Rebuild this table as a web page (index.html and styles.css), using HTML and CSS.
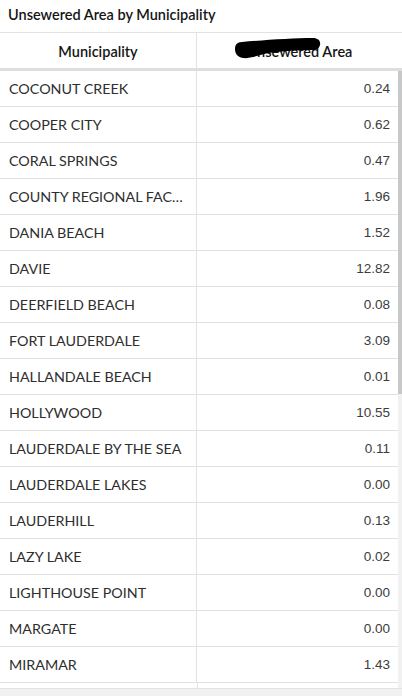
FILE: index.html
```html
<!DOCTYPE html>
<html lang="en">
<head>
  <meta charset="UTF-8" />
  <meta name="viewport" content="width=device-width, initial-scale=1.0"/>
  <title>Unsewered Area by Municipality</title>
  <link rel="stylesheet" href="styles.css">
</head>
<body>
  <div class="panel">
    <div class="title">Unsewered Area by Municipality</div>

    <div class="table">
      <div class="head">
        <div class="cell">Municipality</div>
        <div class="cell">
          <span class="head-label">Unsewered Area</span>
          <svg class="redact" width="86" height="24" viewBox="0 0 86 24">
            <path d="M7 5 C30 3 58 1 78 1 C83 1 86 4 85 8 C84 12 81 13 77 13 C64 13 48 14 34 16 C24 18 14 22 8 21 C2 20 0 16 0 12 C0 8 2 5 7 5 Z" fill="#000"/>
          </svg>
        </div>
      </div>

      <div class="body-wrap">
        <div class="rows" id="rows"></div>
        <div class="scroll-track"><div class="scroll-thumb"></div></div>
      </div>
      <div class="bottom-strip"></div>
    </div>
  </div>

  <script>
    const data = [
      ["COCONUT CREEK", "0.24"],
      ["COOPER CITY", "0.62"],
      ["CORAL SPRINGS", "0.47"],
      ["COUNTY REGIONAL FAC…", "1.96"],
      ["DANIA BEACH", "1.52"],
      ["DAVIE", "12.82"],
      ["DEERFIELD BEACH", "0.08"],
      ["FORT LAUDERDALE", "3.09"],
      ["HALLANDALE BEACH", "0.01"],
      ["HOLLYWOOD", "10.55"],
      ["LAUDERDALE BY THE SEA", "0.11"],
      ["LAUDERDALE LAKES", "0.00"],
      ["LAUDERHILL", "0.13"],
      ["LAZY LAKE", "0.02"],
      ["LIGHTHOUSE POINT", "0.00"],
      ["MARGATE", "0.00"],
      ["MIRAMAR", "1.43"]
    ];

    const rows = document.getElementById("rows");
    data.forEach(([name, value]) => {
      rows.innerHTML += `
        <div class="row">
          <div class="cell name">${name}</div>
          <div class="cell value">${value}</div>
        </div>
      `;
    });
  </script>
</body>
</html>
```

FILE: styles.css
```css
body {
  margin: 0;
  background-color: #fff;
  font-family: 'Lato', sans-serif;
  color: #323232;
}

.panel {
  width: 402px;
  height: 696px;
  overflow: hidden;
  display: flex;
  flex-direction: column;
}

.title {
  height: 33px;
  box-sizing: border-box;
  padding: 6px 8px 0;
  font-size: 14.5px;
  font-weight: 600;
  color: #151515;
  border-bottom: 1px solid #e2e2e2;
}

.table {
  flex: 1;
  display: flex;
  flex-direction: column;
}

.head {
  display: grid;
  grid-template-columns: 197px 1fr;
  height: 38px;
  box-sizing: border-box;
  border-bottom: 3px solid #dedede;
  font-size: 14.5px;
  font-weight: 600;
  color: #151515;
}

.head .cell {
  position: relative;
  display: flex;
  align-items: center;
  justify-content: center;
  padding-top: 1px;
}

.head .cell:first-child {
  border-right: 1px solid #e2e2e2;
}

.redact {
  position: absolute;
  left: 38px;
  top: 4px;
}

.body-wrap {
  height: 617px;
  display: flex;
  overflow: hidden;
}

.rows {
  flex: 1;
  background: linear-gradient(to right, transparent 197px, #e2e2e2 197px, #e2e2e2 198px, transparent 198px);
}

.row {
  display: grid;
  grid-template-columns: 197px 1fr;
  height: 36px;
  box-sizing: border-box;
  border-bottom: 1px solid #e2e2e2;
  background-color: #fff;
}

.row .cell {
  display: flex;
  align-items: center;
  padding: 0 8px 0 9px;
  font-size: 14.3px;
  min-width: 0;
}

.row .name {
  border-right: 1px solid #e2e2e2;
  white-space: nowrap;
  color: #2e2e2e;
}

.row .value {
  justify-content: flex-end;
  font-family: 'Liberation Sans', Arial, sans-serif;
  font-size: 13.5px;
  color: #3c3c3c;
}

.scroll-track {
  width: 4px;
  background-color: #f1f1f1;
}

.scroll-thumb {
  height: 323px;
  background-color: #c8c8c8;
}

.bottom-strip {
  flex: 1;
  background-color: #f1f1f1;
  border-top: 1px solid #e2e2e2;
}
```
